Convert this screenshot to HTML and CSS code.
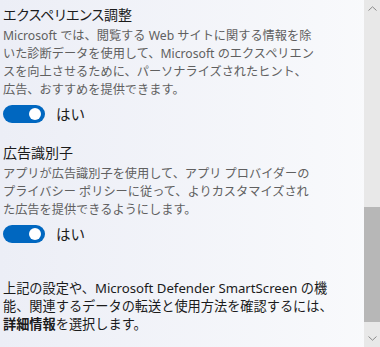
FILE: index.html
```html
<!DOCTYPE html>
<html lang="ja">
<head>
    <meta charset="UTF-8">
    <meta name="viewport" content="width=device-width, initial-scale=1.0">
    <title>プライバシー設定</title>
    <link rel="stylesheet" href="styles.css">
</head>
<body>
    <div class="panel">
        <div class="content">
            <section class="setting">
                <h2 class="setting-title">エクスペリエンス調整</h2>
                <p class="setting-desc">Microsoft では、閲覧する Web サイトに関する情報を除<br>いた診断データを使用して、Microsoft のエクスペリエン<br>スを向上させるために、パーソナライズされたヒント、<br>広告、おすすめを提供できます。</p>
                <label class="toggle-row">
                    <span class="toggle"><span class="knob"></span></span>
                    <span class="toggle-label">はい</span>
                </label>
            </section>

            <section class="setting">
                <h2 class="setting-title">広告識別子</h2>
                <p class="setting-desc">アプリが広告識別子を使用して、アプリ プロバイダーの<br>プライバシー ポリシーに従って、よりカスタマイズされ<br>た広告を提供できるようにします。</p>
                <label class="toggle-row">
                    <span class="toggle"><span class="knob"></span></span>
                    <span class="toggle-label">はい</span>
                </label>
            </section>

            <p class="note">上記の設定や、Microsoft Defender SmartScreen の機<br>能、関連するデータの転送と使用方法を確認するには、<br><strong>詳細情報</strong>を選択します。</p>
        </div>

        <div class="scrollbar">
            <span class="arrow">
                <svg width="9" height="5" viewBox="0 0 9 5"><path d="M0.5 4.5 L4.5 0.8 L8.5 4.5" fill="none" stroke="#8a8a8a" stroke-width="1"/></svg>
            </span>
            <div class="track">
                <div class="thumb"></div>
            </div>
            <span class="arrow">
                <svg width="9" height="5" viewBox="0 0 9 5"><path d="M0.5 0.5 L4.5 4.2 L8.5 0.5" fill="none" stroke="#8a8a8a" stroke-width="1"/></svg>
            </span>
        </div>
    </div>
</body>
</html>
```

FILE: styles.css
```css
html, body {
    margin: 0;
    padding: 0;
    height: 100%;
    overflow: hidden;
}

body {
    font-family: "Segoe UI", "Noto Sans", "Noto Sans CJK JP", sans-serif;
    background: linear-gradient(90deg, #eceef6, #f9fafc);
    color: #1b1b1b;
}

.panel {
    display: flex;
    height: 347px;
}

.content {
    flex: 1;
    padding: 5px 8px 0 3px;
    white-space: nowrap;
}

.setting {
    margin-bottom: 20px;
}

.setting-title {
    margin: 0 0 2px;
    font-size: 14px;
    font-weight: normal;
    font-feature-settings: "palt";
    line-height: 20px;
}

.setting-desc {
    margin: 0;
    font-size: 12.2px;
    line-height: 18px;
    color: #606060;
}

.toggle-row {
    display: flex;
    align-items: center;
    gap: 11px;
    margin-top: 6px;
}

.toggle {
    display: flex;
    align-items: center;
    justify-content: flex-end;
    width: 42px;
    height: 18px;
    padding: 0 4px;
    box-sizing: border-box;
    border-radius: 9px;
    background: #0067c0;
}

.knob {
    width: 12px;
    height: 12px;
    border-radius: 50%;
    background: #fff;
}

.toggle-label {
    font-size: 14.5px;
    line-height: 18px;
}

.note {
    margin: 36px 0 0;
    font-size: 13.2px;
    line-height: 18px;
    color: #1b1b1b;
}

.note strong {
    font-weight: bold;
}

.scrollbar {
    display: flex;
    flex-direction: column;
    width: 16px;
    background: #e8e8e8;
}

.arrow {
    display: flex;
    align-items: center;
    justify-content: center;
    height: 17px;
}

.track {
    flex: 1;
    display: flex;
    flex-direction: column;
    padding-top: 190px;
}

.thumb {
    height: 115px;
    background: #b7b7b7;
}
```
